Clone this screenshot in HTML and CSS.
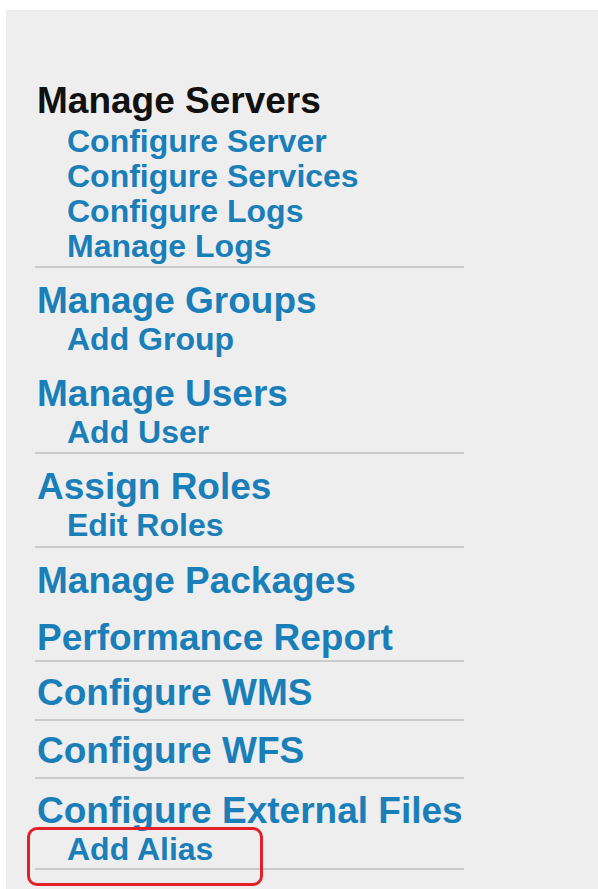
FILE: index.html
```html
<!DOCTYPE html>
<html lang="en">
<head>
<meta charset="utf-8">
<title>Administration</title>
<link rel="stylesheet" href="styles.css">
</head>
<body>
<div class="panel">
  <nav class="nav">
    <div class="nav-group nav-group--servers">
      <div class="nav-title nav-title--section">Manage Servers</div>
      <ul class="nav-sub">
        <li><a href="#">Configure Server</a></li>
        <li><a href="#">Configure Services</a></li>
        <li><a href="#">Configure Logs</a></li>
        <li><a href="#">Manage Logs</a></li>
      </ul>
    </div>
    <div class="nav-group nav-group--open">
      <a class="nav-title" href="#">Manage Groups</a>
      <ul class="nav-sub">
        <li><a href="#">Add Group</a></li>
      </ul>
    </div>
    <div class="nav-group">
      <a class="nav-title" href="#">Manage Users</a>
      <ul class="nav-sub">
        <li><a href="#">Add User</a></li>
      </ul>
    </div>
    <div class="nav-group nav-group--roles">
      <a class="nav-title" href="#">Assign Roles</a>
      <ul class="nav-sub">
        <li><a href="#">Edit Roles</a></li>
      </ul>
    </div>
    <div class="nav-group nav-group--open">
      <a class="nav-title" href="#">Manage Packages</a>
    </div>
    <div class="nav-group">
      <a class="nav-title" href="#">Performance Report</a>
    </div>
    <div class="nav-group nav-group--wms">
      <a class="nav-title" href="#">Configure WMS</a>
    </div>
    <div class="nav-group nav-group--wfs">
      <a class="nav-title" href="#">Configure WFS</a>
    </div>
    <div class="nav-group nav-group--files">
      <a class="nav-title" href="#">Configure External Files</a>
      <ul class="nav-sub">
        <li class="nav-sub-item--marked"><a href="#">Add Alias</a><span class="marker"></span></li>
      </ul>
    </div>
  </nav>
</div>
</body>
</html>
```

FILE: styles.css
```css
html, body {
  margin: 0;
  padding: 0;
  background: #ffffff;
}

body {
  font-family: "Liberation Sans", Arial, sans-serif;
  font-weight: bold;
  overflow: hidden;
}

.panel {
  margin: 10px 0 0 6px;
  min-height: calc(100vh - 10px);
  box-sizing: border-box;
  padding-top: 59px;
  background: #eeeeee;
}

.nav {
  display: flex;
  flex-direction: column;
}

.nav-group {
  margin-left: 29px;
  width: 429px;
  padding: 13px 0 2px;
  border-bottom: 2px solid #cbcbcb;
}

.nav-group--servers {
  padding-top: 12px;
  padding-bottom: 2px;
}

.nav-group--open {
  border-bottom: 0;
  padding-bottom: 4px;
}

.nav-group--roles {
  padding-bottom: 3px;
}

.nav-group--wms {
  padding-top: 11px;
  padding-bottom: 6px;
}

.nav-group--wfs {
  padding-top: 10px;
  padding-bottom: 6px;
}

.nav-group--files {
  padding-top: 12px;
  padding-bottom: 1px;
}

.nav-title {
  display: block;
  padding-left: 2px;
  font-size: 37px;
  line-height: 40px;
  color: #1a7fb9;
  text-decoration: none;
  white-space: nowrap;
}

.nav-title--section {
  color: #111111;
  margin-bottom: 3px;
}

.nav-sub {
  list-style: none;
  margin: 1px 0 0;
  padding: 0 0 0 32px;
}

.nav-sub li {
  font-size: 32px;
  line-height: 35px;
  white-space: nowrap;
}

.nav-sub a {
  color: #1a7fb9;
  text-decoration: none;
}

.nav-sub-item--marked {
  position: relative;
}

/* red highlight ring drawn around the alias entry */
.marker {
  position: absolute;
  left: -40px;
  top: -5px;
  width: 230px;
  height: 53px;
  border: 3px solid #e3202a;
  border-radius: 10px;
  pointer-events: none;
}
```
